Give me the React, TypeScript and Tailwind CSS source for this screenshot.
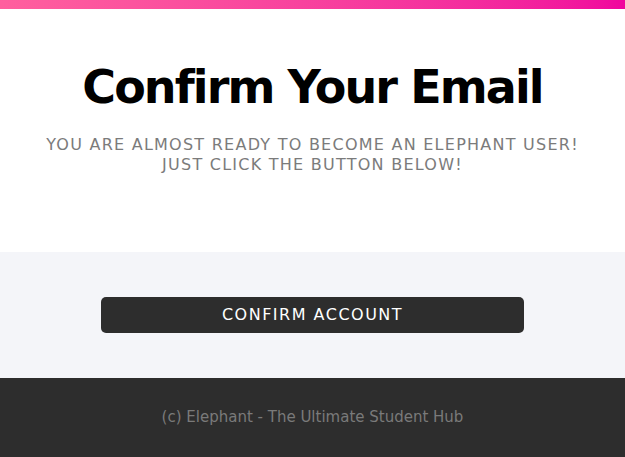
export default function App() {
  return (
    <div className="min-h-[457px] flex flex-col bg-white font-['DejaVu_Sans',sans-serif]">
      {/* Top accent bar */}
      <div className="h-[9px] bg-gradient-to-r from-[#ff5f9e] to-[#f0049d]" />

      {/* Heading */}
      <div className="h-[243px] flex flex-col items-center pt-[50px] text-center">
        <h1 className="text-[46px] leading-[56px] font-bold tracking-[-1.9px] text-black">Confirm Your Email</h1>
        <p className="mt-[20px] text-[16px] leading-[20px] uppercase tracking-[1.25px] text-[#7b7b7b]">
          You are almost ready to become an Elephant user!
          <br />
          Just click the button below!
        </p>
      </div>

      {/* Action */}
      <div className="h-[126px] bg-[#f4f5f9] flex items-center justify-center">
        <button className="w-[423px] h-[36px] rounded-[5px] bg-[#2d2d2d] text-white text-[16px] uppercase tracking-[1.5px]">
          Confirm Account
        </button>
      </div>

      {/* Footer */}
      <footer className="h-[79px] bg-[#2d2d2d] flex items-center justify-center">
        <p className="text-[15px] text-[#7a7a7a]">(c) Elephant - The Ultimate Student Hub</p>
      </footer>
    </div>
  );
}
